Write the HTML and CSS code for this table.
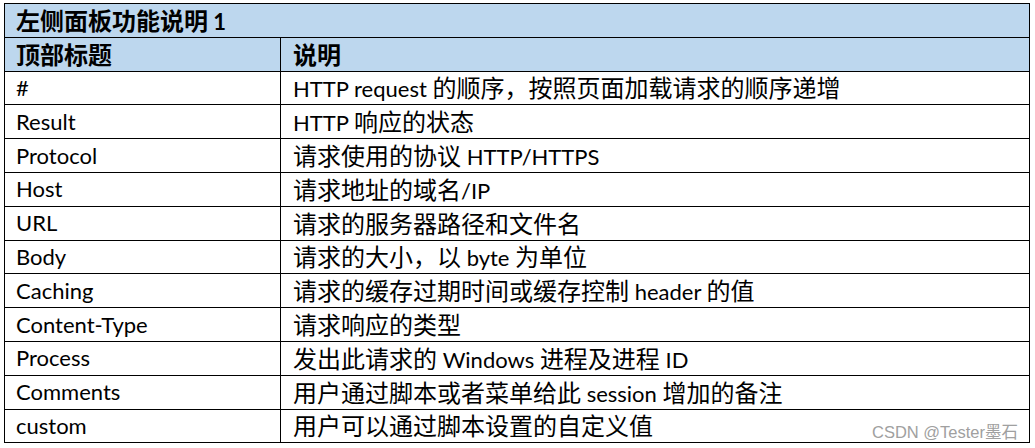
FILE: index.html
```html
<!DOCTYPE html>
<html lang="zh">
<head>
<meta charset="utf-8">
<title>左侧面板功能说明 1</title>
<link rel="stylesheet" href="styles.css">
</head>
<body>
<div class="page">
  <table class="doc-table">
    <colgroup>
      <col class="col-key">
      <col class="col-desc">
    </colgroup>
    <thead>
      <tr class="title-row"><th colspan="2"><span class="zh">左侧面板功能说明</span> 1</th></tr>
      <tr class="head-row"><th><span class="zh">顶部标题</span></th><th><span class="zh">说明</span></th></tr>
    </thead>
    <tbody>
      <tr><td>#</td><td>HTTP request <span class="zh">的顺序，按照页面加载请求的顺序递增</span></td></tr>
      <tr><td>Result</td><td>HTTP <span class="zh">响应的状态</span></td></tr>
      <tr><td>Protocol</td><td><span class="zh">请求使用的协议</span> HTTP/HTTPS</td></tr>
      <tr><td>Host</td><td><span class="zh">请求地址的域名</span>/IP</td></tr>
      <tr><td>URL</td><td><span class="zh">请求的服务器路径和文件名</span></td></tr>
      <tr><td>Body</td><td><span class="zh">请求的大小，以</span> byte <span class="zh">为单位</span></td></tr>
      <tr><td>Caching</td><td><span class="zh">请求的缓存过期时间或缓存控制</span> header <span class="zh">的值</span></td></tr>
      <tr><td>Content-Type</td><td><span class="zh">请求响应的类型</span></td></tr>
      <tr><td>Process</td><td><span class="zh">发出此请求的</span> Windows <span class="zh">进程及进程</span> ID</td></tr>
      <tr><td>Comments</td><td><span class="zh">用户通过脚本或者菜单给此</span> session <span class="zh">增加的备注</span></td></tr>
      <tr><td>custom</td><td><span class="zh">用户可以通过脚本设置的自定义值</span></td></tr>
    </tbody>
  </table>
  <div class="watermark">CSDN @Tester墨石</div>
</div>
</body>
</html>
```

FILE: styles.css
```css
html, body {
  margin: 0;
  padding: 0;
  background: #ffffff;
}

.page {
  position: relative;
  width: 1035px;
  height: 448px;
  padding: 3px 0 0 4px;
  box-sizing: border-box;
}

.doc-table {
  border-collapse: collapse;
  table-layout: fixed;
  width: 1026px;
  height: 440px;
  font-family: "Lato", "Noto Sans CJK SC", sans-serif;
  font-size: 22px;
  color: #000;
}

.col-key { width: 276px; }

.doc-table th,
.doc-table td {
  border: 1px solid #000;
  padding: 0 11px;
  text-align: left;
  vertical-align: middle;
  white-space: nowrap;
  line-height: 1;
}

.doc-table td + td,
.head-row th + th { padding-left: 12px; }

.doc-table th {
  background: #bdd7ee;
  font-weight: 700;
}

.doc-table tr { height: 33.8px; }

.zh {
  font-family: "Noto Sans CJK SC", sans-serif;
  font-size: 24px;
  line-height: 1;
}

.watermark {
  position: absolute;
  right: 17px;
  bottom: 8px;
  font-family: "Liberation Sans", "Noto Sans CJK SC", sans-serif;
  font-size: 16.5px;
  color: #a0a0a0;
  line-height: 1;
}
```
